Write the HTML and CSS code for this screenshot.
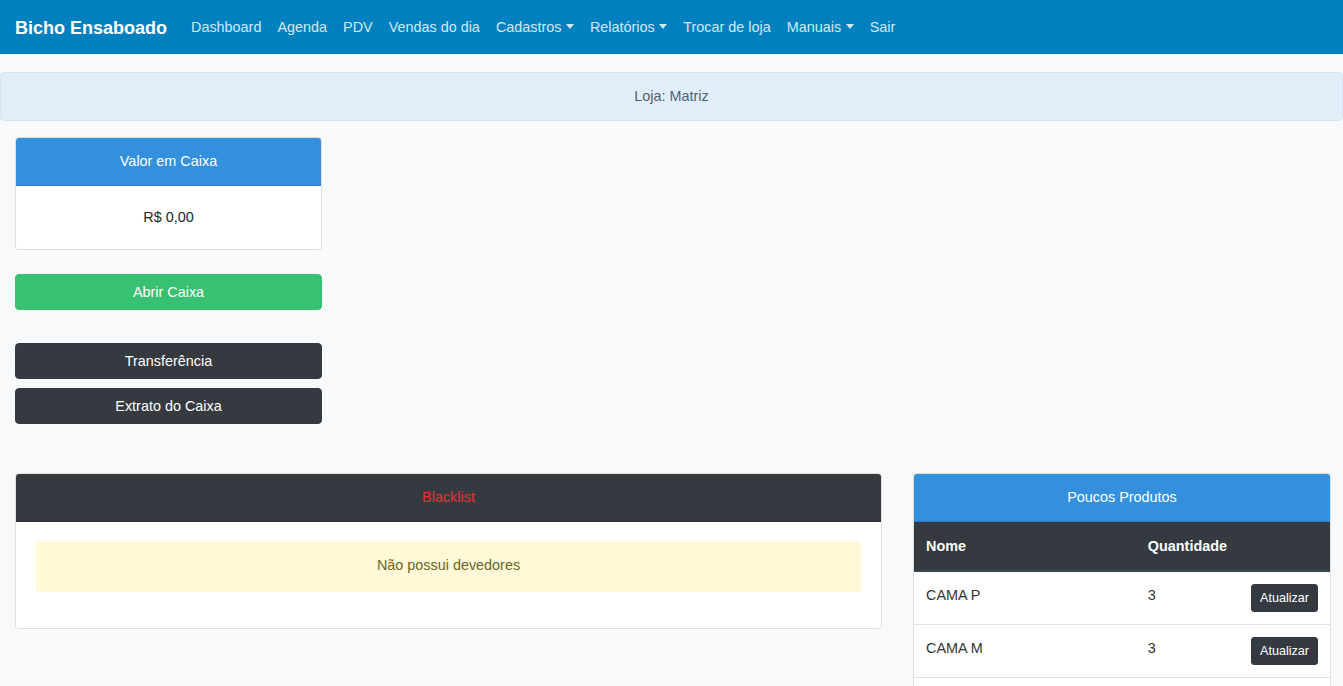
FILE: index.html
```html
<!DOCTYPE html>
<html lang="pt-BR">
<head>
<meta charset="utf-8">
<title>Bicho Ensaboado</title>
<link rel="stylesheet" href="styles.css">
</head>
<body>
<nav class="navbar">
  <a class="brand" href="#">Bicho Ensaboado</a>
  <ul class="nav">
    <li><a href="#">Dashboard</a></li>
    <li><a href="#">Agenda</a></li>
    <li><a href="#">PDV</a></li>
    <li><a href="#">Vendas do dia</a></li>
    <li><a href="#" class="dropdown">Cadastros</a></li>
    <li><a href="#" class="dropdown">Relatórios</a></li>
    <li><a href="#">Trocar de loja</a></li>
    <li><a href="#" class="dropdown">Manuais</a></li>
    <li><a href="#">Sair</a></li>
  </ul>
</nav>

<main class="main">
  <div class="store-banner">Loja: Matriz</div>

  <div class="content">
    <div class="left-col">
      <div class="card">
        <div class="card-header header-primary">Valor em Caixa</div>
        <div class="card-body center">R$ 0,00</div>
      </div>
      <button class="btn btn-success btn-block open-btn">Abrir Caixa</button>
      <button class="btn btn-dark btn-block transfer-btn">Transferência</button>
      <button class="btn btn-dark btn-block">Extrato do Caixa</button>
    </div>

    <div class="bottom-row">
      <div class="card">
        <div class="card-header header-dark">Blacklist</div>
        <div class="card-body">
          <div class="alert-warning">Não possui devedores</div>
        </div>
      </div>
      <div class="card products-card">
        <div class="card-header header-primary">Poucos Produtos</div>
        <table class="table">
          <thead>
            <tr><th>Nome</th><th>Quantidade</th><th></th></tr>
          </thead>
          <tbody>
            <tr><td>CAMA P</td><td>3</td><td class="actions"><button class="btn-sm">Atualizar</button></td></tr>
            <tr><td>CAMA M</td><td>3</td><td class="actions"><button class="btn-sm">Atualizar</button></td></tr>
            <tr><td>CAMA G</td><td>2</td><td class="actions"><button class="btn-sm">Atualizar</button></td></tr>
          </tbody>
        </table>
      </div>
    </div>
  </div>
</main>
</body>
</html>
```

FILE: styles.css
```css
* { box-sizing: border-box; }
html, body { margin: 0; padding: 0; }
body {
  font-family: "Liberation Sans", Arial, sans-serif;
  font-size: 14.4px;
  line-height: 1.6;
  color: #212529;
  background: #f8f9fa;
  overflow: hidden;
}

.navbar {
  height: 54px;
  background: #0180c0;
  display: flex;
  align-items: center;
  padding: 2px 16px 0 15px;
}
.brand {
  color: #fff;
  font-weight: bold;
  font-size: 18px;
  text-decoration: none;
  margin-right: 16px;
}
.nav {
  list-style: none;
  margin: 0;
  padding: 0;
  display: flex;
}
.nav a {
  display: block;
  padding: 8px;
  color: #d3e8f5;
  text-decoration: none;
}
.dropdown::after {
  content: "";
  display: inline-block;
  margin-left: 4.5px;
  vertical-align: 3px;
  border-top: 5px solid #d3e8f5;
  border-left: 4.5px solid transparent;
  border-right: 4.5px solid transparent;
}

.main { padding-top: 18px; }

.store-banner {
  background: #e1eefa;
  border: 1px solid #d5e4f3;
  border-radius: 4px;
  padding: 12px 20px;
  text-align: center;
  color: #4f6070;
}

.content { padding: 16px 15px 0; }

.left-col {
  width: 307px;
  display: flex;
  flex-direction: column;
}

.card {
  background: #fff;
  border: 1px solid rgba(0, 0, 0, 0.125);
  border-radius: 4px;
  overflow: hidden;
}
.card-header {
  padding: 12px 20px;
  text-align: center;
  border-bottom: 1px solid rgba(0, 0, 0, 0.125);
}
.header-primary { background: #3490dc; color: #fff; }
.header-dark { background: #343a40; color: #e3342f; }
.card-body { padding: 20px; }
.center { text-align: center; }

.btn {
  font-family: inherit;
  font-size: 14.4px;
  line-height: 22px;
  border: 1px solid transparent;
  border-radius: 4px;
  padding: 6px 12px;
  color: #fff;
  text-align: center;
  cursor: pointer;
}
.btn-block { display: block; width: 100%; }
.btn-success { background: #38c172; border-color: #38c172; }
.btn-dark { background: #343a40; border-color: #343a40; margin-bottom: 9px; }
.open-btn { margin-top: 24px; }
.transfer-btn { margin-top: 33px; }

.bottom-row {
  display: grid;
  grid-template-columns: 867px 418px;
  column-gap: 31px;
  align-items: start;
  margin-top: 40px;
}

.alert-warning {
  background: #fff9d8;
  border: 1px solid #fff6cc;
  border-radius: 4px;
  padding: 11px 20px 14px;
  margin-bottom: 16px;
  text-align: center;
  color: #6c6524;
}

.products-card { margin-bottom: 40px; }

.table {
  width: 100%;
  border-collapse: collapse;
}
.table th, .table td {
  padding: 12px;
  text-align: left;
  vertical-align: top;
}
.table thead th {
  background: #343a40;
  color: #fff;
  font-weight: bold;
  padding-top: 13px;
  padding-bottom: 12px;
  border-bottom: 2px solid #3e444a;
}
.table tbody td {
  border-top: 1px solid #dee2e6;
  border-bottom: 1px solid #dee2e6;
  color: #333;
}
.table th:first-child { width: 222px; }
.table td.actions { text-align: right; }
.btn-sm {
  font-family: inherit;
  font-size: 12.6px;
  line-height: 18px;
  padding: 4px 8px;
  background: #343a40;
  color: #fff;
  border: 1px solid #343a40;
  border-radius: 3px;
}
```
